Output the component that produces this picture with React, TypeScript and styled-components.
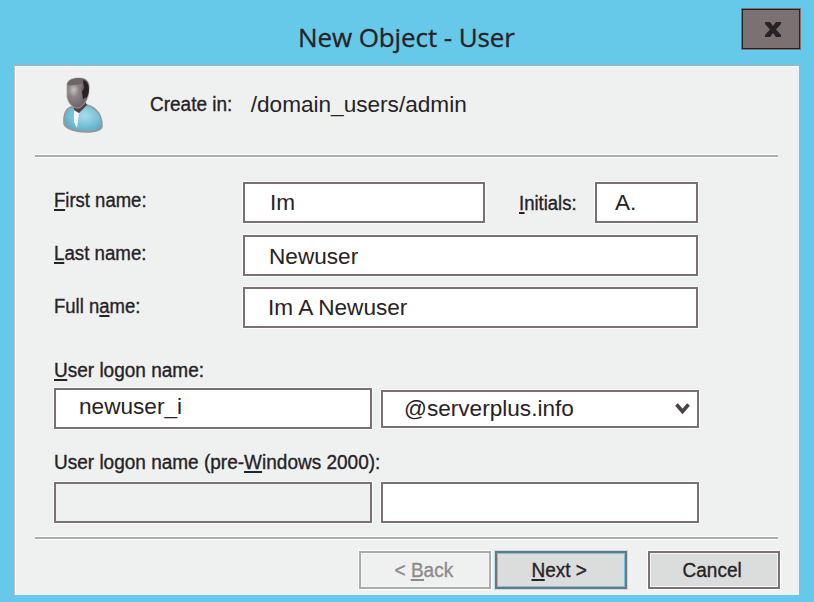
import React from "react";
import styled, { createGlobalStyle } from "styled-components";

const GlobalStyle = createGlobalStyle`
  * { box-sizing: border-box; }
  body { margin: 0; background: #66c9e9; font-family: "Liberation Sans", Arial, sans-serif; color: #262226; }
`;

const Window = styled.main`
  width: 814px;
  height: 602px;
  overflow: hidden;
  padding: 0 15px 7px 14px;
  display: flex;
  flex-direction: column;
  background: #66c9e9;
`;

const TitleBar = styled.header`
  height: 65px;
  flex: none;
  display: grid;
  grid-template-columns: 284px 1fr 60px;
  margin-right: -2px;
`;

const Title = styled.h1`
  grid-column: 2;
  margin: 19px 0 0;
  font: 400 26px/36px "Open Sans", "Noto Sans", sans-serif;
  letter-spacing: -0.1px;
  white-space: nowrap;
  -webkit-text-stroke: 0.3px #262226;
`;

const CloseButton = styled.button`
  width: 60px;
  height: 42px;
  margin-top: 8px;
  padding: 0 0 0 3px;
  display: flex;
  align-items: center;
  justify-content: center;
  background: #7b7172;
  border: 1px solid #7b7172;
  box-shadow: inset 0 0 0 1px #262226;
`;

const Panel = styled.section`
  height: 530px;
  display: flex;
  flex-direction: column;
  background: #eff1f1;
  border-top: 1px solid #a9adad;
  border-left: 1px solid #c9bfc2;
  box-shadow: inset 1px 1px 0 #fff;
`;

const Intro = styled.div`
  height: 88px;
  flex: none;
  display: flex;
  align-items: flex-start;
  padding-left: 47px;
`;

const Rule = styled.hr`
  flex: none;
  width: 743px;
  height: 4px;
  margin: 0 0 0 20px;
  border: solid #fff;
  border-width: 1px 0;
  background: #a9acac;
`;

const Form = styled.div`
  height: 378px;
  flex: none;
  padding: 24px 0 0 39px;
`;

const Fields = styled.div`
  display: grid;
  grid-template-columns: 189px 242px 110px 103px;
  grid-template-rows: 42px 42px 41px;
  row-gap: 10.5px;
`;

const Pair = styled.div<{ $top: number }>`
  display: grid;
  grid-template-columns: 318px 318px;
  column-gap: 9px;
  margin-top: ${(p) => p.$top}px;
`;

const Label = styled.label<{ $top?: number; $left?: number; $stretch?: number }>`
  display: block;
  height: 24px;
  margin-top: ${(p) => p.$top ?? 0}px;
  margin-left: ${(p) => p.$left ?? 0}px;
  font-size: 20px;
  line-height: 24px;
  white-space: nowrap;
  transform: scaleX(${(p) => p.$stretch ?? 0.925});
  transform-origin: left;
  -webkit-text-stroke: 0.35px #262226;
`;

const Key = styled.span`
  display: inline-block;
  height: 23px;
  border-bottom: 2px solid currentColor;
  vertical-align: top;
`;

const Path = styled.div`
  margin: 25px 0 0 14px;
  font-size: 22.6px;
  line-height: 28px;
  white-space: nowrap;
`;

const Field = styled.div<{ $wide?: boolean; $disabled?: boolean; $indent?: number; $drop?: number }>`
  grid-column: ${(p) => (p.$wide ? "2 / 5" : "auto")};
  height: 41px;
  padding: ${(p) => p.$drop ?? 5}px 0 0 ${(p) => p.$indent ?? 24}px;
  border: 2px solid #7b7172;
  outline: 1px solid #fafbfb;
  background: ${(p) => (p.$disabled ? "#eff1f1" : "#fff")};
  font-size: 22.6px;
  line-height: 28px;
  white-space: nowrap;
`;

const Combo = styled(Field)`
  height: 38px;
  margin-top: 2px;
  display: flex;
  justify-content: space-between;
  padding-right: 7px;
`;

const Chevron = styled.svg`
  margin-top: 8px;
`;

const Actions = styled.footer`
  display: flex;
  padding: 11px 0 0 344px;
`;

const Button = styled.button<{ $tone?: "muted" | "primary"; $gap?: number }>`
  width: 132px;
  height: 38px;
  margin: 0 ${(p) => p.$gap ?? 0}px 0 0;
  padding: 0 3px 0 0;
  display: flex;
  justify-content: center;
  align-items: center;
  border: 2px solid ${(p) => (p.$tone === "muted" ? "#a9acac" : "#7b7172")};
  box-shadow: inset 0 0 0 1px ${(p) => (p.$tone === "primary" ? "#66c9e9" : "#f4f5f5")},
    0 0 0 1px ${(p) => (p.$tone === "primary" ? "#66c9e966" : "#fff")};
  background: ${(p) => (p.$tone === "muted" ? "#eff1f1" : "#dbdddd")};
  color: ${(p) => (p.$tone === "muted" ? "#8f8a8b" : "#262226")};
  font: 20px/24px "Liberation Sans", Arial, sans-serif;
  -webkit-text-stroke: 0.35px currentColor;
`;

const Caption = styled.span`
  display: block;
  transform: scaleX(0.95);
`;

const Avatar = styled.svg`
  display: block;
  flex: none;
  margin-top: 11px;
`;

const UserIcon = () => (
  <Avatar width="42" height="57" viewBox="0 0 42 57">
    <defs>
      <radialGradient id="face" cx="0.3" cy="0.4" r="0.6">
        <stop offset="0" stopColor="#c4c4c6" />
        <stop offset="0.4" stopColor="#8b8283" />
        <stop offset="1" stopColor="#6f6566" />
      </radialGradient>
      <radialGradient id="coat" cx="0.55" cy="0.4" r="0.6">
        <stop offset="0" stopColor="#a9dceb" />
        <stop offset="0.7" stopColor="#70bdd6" />
        <stop offset="1" stopColor="#6aa4b8" />
      </radialGradient>
    </defs>
    <path d="M9 30 C3 32 1 40 2 47 C4 52 13 55 24 55 C34 55 40 53 40 49 C40 39 35 31 25 28 Z" fill="url(#coat)" stroke="#9b9697" strokeWidth="1.5" />
    <path d="M12 33 L17 36 L15 51 L12 45 Z" fill="#f4f7f7" />
    <path d="M11 26 L23 24 L25 28 L17 36 L12 33 Z" fill="#4a4244" />
    <path d="M5 8 C5 3 10 1 17 1 C25 1 28 5 27 13 C27 21 23 28 17 31 C11 32 6 26 5 20 Z" fill="url(#face)" stroke="#aaa6a7" strokeWidth="0.8" />
    <path d="M5 8 C7 1 16 0 22 2 C28 4 28 14 25 20 L21 23 L19 12 L21 6 Q14 9 5 8 Z" fill="#6f6566" />
    <path d="M21 3 C28 4 28 15 25 20 L21 22 L20 15 L22 11 Z" fill="#262226" />
  </Avatar>
);

export default function App() {
  return (
    <>
      <GlobalStyle />
      <Window>
        <TitleBar>
          <Title>New Object - User</Title>
          <CloseButton aria-label="Close">
            <svg width="16" height="15" viewBox="0 0 16 15">
              <path d="M0 0H5L8 4L11 0H16V2L11 7.5L16 13V15H11L8 11L5 15H0V13L5 7.5L0 2Z" fill="#262226" />
            </svg>
          </CloseButton>
        </TitleBar>
        <Panel>
          <Intro>
            <UserIcon />
            <Label $top={26} $left={46} $stretch={0.95}>Create in:</Label>
            <Path>/domain_users/admin</Path>
          </Intro>
          <Rule />
          <Form>
            <Fields>
              <Label $top={6}><Key>F</Key>irst name:</Label>
              <Field $indent={25}>Im</Field>
              <Label $top={9} $left={34}><Key>I</Key>nitials:</Label>
              <Field $indent={18}>A.</Field>
              <Label $top={6} $stretch={0.935}><Key>L</Key>ast name:</Label>
              <Field $wide $drop={6}>Newuser</Field>
              <Label $top={7}>Full n<Key>a</Key>me:</Label>
              <Field $wide $indent={23}>Im A Newuser</Field>
            </Fields>
            <Label $top={30} $stretch={0.95}><Key>U</Key>ser logon name:</Label>
            <Pair $top={6}>
              <Field $indent={23} $drop={3}>newuser_i</Field>
              <Combo $indent={21} $drop={3}>
                <span>@serverplus.info</span>
                <Chevron width="15" height="12" viewBox="0 0 15 12">
                  <path d="M1.5 1.5L7.5 8.5L13.5 1.5" fill="none" stroke="#4a4345" strokeWidth="3.6" />
                </Chevron>
              </Combo>
            </Pair>
            <Label $top={21} $stretch={0.95}>User logon name (pre-<Key>W</Key>indows 2000):</Label>
            <Pair $top={8}>
              <Field $disabled />
              <Field />
            </Pair>
          </Form>
          <Rule />
          <Actions>
            <Button $tone="muted" $gap={4}><Caption>&lt; <Key>B</Key>ack</Caption></Button>
            <Button $tone="primary" $gap={21}><Caption><Key>N</Key>ext &gt;</Caption></Button>
            <Button><Caption>Cancel</Caption></Button>
          </Actions>
        </Panel>
      </Window>
    </>
  );
}
